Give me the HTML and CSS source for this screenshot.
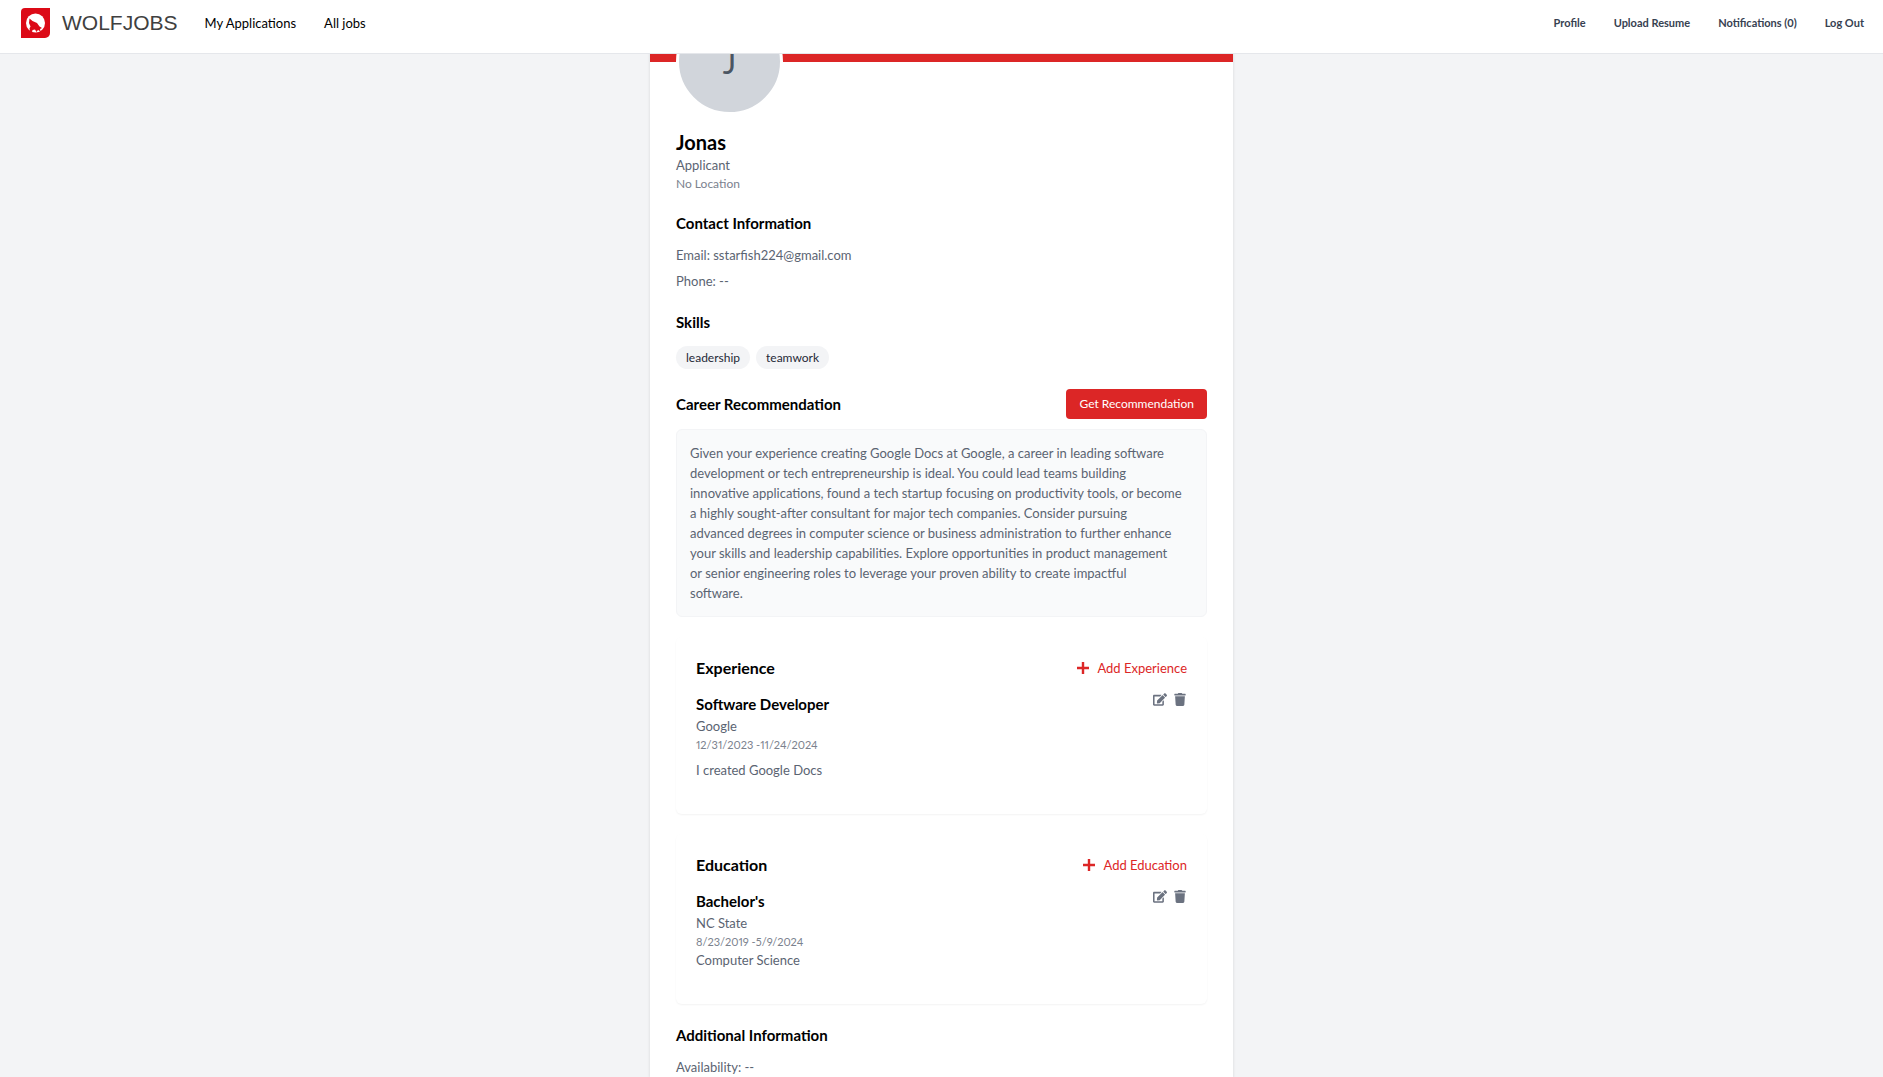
FILE: index.html
```html
<!DOCTYPE html>
<html lang="en">
<head>
<meta charset="utf-8">
<title>WolfJobs</title>
<link rel="stylesheet" href="styles.css">
</head>
<body>
<svg class="sprite" aria-hidden="true">
  <symbol id="plus" viewBox="0 0 12 12"><path d="M4.8 0h2.4v4.8H12v2.4H7.200V12H4.800V7.200H0V4.800h4.800z"/></symbol>
  <symbol id="edit" viewBox="0 0 576 512"><path d="M402.600 83.200l90.200 90.200c3.800 3.800 3.800 10 0 13.800L274.400 405.600l-92.800 10.300c-12.400 1.400-22.900-9.100-21.500-21.500l10.300-92.800L388.800 83.200c3.800-3.800 10-3.800 13.800 0zm162-22.900l-48.800-48.800c-15.200-15.200-39.900-15.200-55.200 0l-35.400 35.400c-3.800 3.800-3.800 10 0 13.800l90.200 90.200c3.800 3.800 10 3.800 13.800 0l35.400-35.400c15.200-15.300 15.200-40 0-55.200zM384 346.200V448H64V128h229.800c3.200 0 6.200-1.300 8.500-3.500l40-40c7.600-7.600 2.200-20.500-8.500-20.500H48C21.500 64 0 85.500 0 112v352c0 26.500 21.500 48 48 48h352c26.500 0 48-21.500 48-48V306.200c0-10.700-12.900-16-20.500-8.500l-40 40c-2.200 2.300-3.500 5.300-3.500 8.500z"/></symbol>
  <symbol id="trash" viewBox="0 0 448 512"><path d="M432 32H312l-9.400-18.700A24 24 0 0 0 281.100 0H166.800a23.700 23.700 0 0 0-21.400 13.300L136 32H16A16 16 0 0 0 0 48v32a16 16 0 0 0 16 16h416a16 16 0 0 0 16-16V48a16 16 0 0 0-16-16zM32 128l21.200 339a48 48 0 0 0 47.900 45h245.800a48 48 0 0 0 47.900-45L416 128z"/></symbol>
</svg>
<header class="topbar">
  <a class="brand" href="#">
    <svg class="logo" viewBox="0 0 29 30" aria-hidden="true">
      <path fill="#dc0a17" d="M4 0h25v25a5 5 0 0 1-5 5H0V4a4 4 0 0 1 4-4z"/>
      <circle cx="14.500" cy="15" r="9.500" fill="#fff"/>
      <path fill="#dc0a17" d="M8.500 10.500l3 2.500 4.500 2 2.500 3.500 2.500 1.500-2 1 .5 2.500-2.500-1.500-1.500 2-1.500-2.500-2.500.5-.5 2.500-2-1.500-.5-2.500 1-2-1.500-3.500z"/>
    </svg>
    <span>WOLFJOBS</span>
  </a>
  <nav class="main-nav">
    <a href="#">My Applications</a>
    <a href="#">All jobs</a>
  </nav>
  <nav class="user-nav">
    <a href="#">Profile</a>
    <a href="#">Upload Resume</a>
    <a href="#">Notifications (0)</a>
    <a href="#">Log Out</a>
  </nav>
</header>
<main class="profile">
  <div class="banner"></div>
  <div class="content">
    <div class="avatar">J</div>
    <h1>Jonas</h1>
    <p class="role">Applicant</p>
    <p class="small">No Location</p>

    <section class="block">
      <h2>Contact Information</h2>
      <p class="field">Email: sstarfish224@gmail.com</p>
      <p class="field">Phone: --</p>
    </section>

    <section class="block">
      <h2>Skills</h2>
      <ul class="skills"><li>leadership</li><li>teamwork</li></ul>
    </section>

    <section class="career">
      <div class="row">
        <h2>Career Recommendation</h2>
        <button class="primary" type="button">Get Recommendation</button>
      </div>
      <p class="advice">Given your experience creating Google Docs at Google, a career in leading software<br>
        development or tech entrepreneurship is ideal. You could lead teams building<br>
        innovative applications, found a tech startup focusing on productivity tools, or become<br>
        a highly sought-after consultant for major tech companies. Consider pursuing<br>
        advanced degrees in computer science or business administration to further enhance<br>
        your skills and leadership capabilities. Explore opportunities in product management<br>
        or senior engineering roles to leverage your proven ability to create impactful<br>
        software.</p>
    </section>

    <section class="panel">
      <div class="row">
        <h2 class="panel-title">Experience</h2>
        <button class="add" type="button"><svg><use href="#plus"/></svg>Add Experience</button>
      </div>
      <article class="entry">
        <div>
          <h3>Software Developer</h3>
          <p class="role">Google</p>
          <p class="small date">12/31/2023 -11/24/2024</p>
          <p class="role note">I created Google Docs</p>
        </div>
        <div class="tools">
          <button type="button" aria-label="Edit experience"><svg><use href="#edit"/></svg></button>
          <button type="button" aria-label="Delete experience"><svg><use href="#trash"/></svg></button>
        </div>
      </article>
    </section>

    <section class="panel">
      <div class="row">
        <h2 class="panel-title">Education</h2>
        <button class="add" type="button"><svg><use href="#plus"/></svg>Add Education</button>
      </div>
      <article class="entry">
        <div>
          <h3>Bachelor's</h3>
          <p class="role">NC State</p>
          <p class="small date">8/23/2019 -5/9/2024</p>
          <p class="role">Computer Science</p>
        </div>
        <div class="tools">
          <button type="button" aria-label="Edit education"><svg><use href="#edit"/></svg></button>
          <button type="button" aria-label="Delete education"><svg><use href="#trash"/></svg></button>
        </div>
      </article>
    </section>

    <section class="block">
      <h2>Additional Information</h2>
      <p class="field">Availability: --</p>
    </section>
  </div>
</main>
</body>
</html>
```
FILE: styles.css
```css
* { box-sizing: border-box; margin: 0; padding: 0; }
body {
  background: #f3f4f6;
  color: #000;
  font: 400 13px/20px Lato, "Open Sans", sans-serif;
}
a { color: inherit; text-decoration: none; }
button { border: 0; background: none; font: inherit; cursor: pointer; }
ul { list-style: none; }
.sprite { display: none; }

.topbar {
  position: fixed;
  inset: 0 0 auto;
  z-index: 1;
  display: flex;
  align-items: center;
  height: 54px;
  padding: 0 19px 8px 21px;
  background: #fff;
  border-bottom: 1px solid #e5e7eb;
}
.brand {
  display: flex;
  align-items: center;
  gap: 12px;
  color: #404040;
  font: 21px/30px "Liberation Sans", Arial, sans-serif;
}
.logo { width: 29px; height: 30px; }
.main-nav, .user-nav { display: flex; gap: 28px; }
.main-nav { margin-left: 27px; }
.user-nav { margin-left: auto; color: #374151; font-size: 11px; font-weight: 700; }

.profile {
  max-width: 583px;
  min-height: 100vh;
  margin: 0 auto;
  background: #fff;
  box-shadow: 0 1px 3px rgba(0, 0, 0, .12);
}
.banner { height: 62px; background: #dc2626; }
.content { padding: 0 26px; }
.avatar {
  width: 107px;
  height: 107px;
  margin-top: -54px;
  border: 3px solid #fff;
  border-radius: 50%;
  background: #d1d5db;
  color: #4b5563;
  font-size: 32px;
  line-height: 101px;
  text-align: center;
}
h1 { margin-top: 14px; font-size: 20px; line-height: 26px; font-weight: 700; }
h2, h3 { font-size: 15px; line-height: 24px; font-weight: 700; }
.role { color: #5b6472; }
.small { color: #7b828e; font-size: 12px; line-height: 17px; }
.date { font-size: 11px; font-variant-numeric: proportional-nums; }
.block { margin-top: 19px; }
.field { margin-top: 6px; color: #5b6472; }
h2 + .field { margin-top: 10px; }
.skills { display: flex; gap: 6px; margin-top: 12px; }
.skills li {
  padding: 1px 10px;
  border-radius: 12px;
  background: #f3f4f6;
  color: #1f2937;
  font-size: 12px;
  line-height: 21px;
}
.row { display: flex; align-items: center; justify-content: space-between; }
.career { margin-top: 20px; }
.primary {
  height: 30px;
  padding: 0 13px;
  border-radius: 4px;
  background: #dc2626;
  color: #fff;
  font-size: 12px;
}
.advice {
  margin-top: 10px;
  padding: 13px;
  border: 1px solid #f3f4f6;
  border-radius: 6px;
  background: #f9fafb;
  color: #5b6472;
}
.panel {
  margin-top: 20px;
  padding: 19px 20px 34px;
  border-radius: 6px;
  box-shadow: 0 1px 2px rgba(0, 0, 0, .05);
}
.panel-title { font-size: 16px; }
.add { display: flex; align-items: center; gap: 8px; color: #dc2626; }
.add svg { width: 12px; height: 12px; fill: currentColor; }
.entry { display: flex; justify-content: space-between; margin-top: 12px; }
.note { margin-top: 7px; }
.tools { display: flex; align-items: flex-start; gap: 6px; }
.tools button { height: 14px; color: #6b7280; line-height: 0; }
.tools svg { width: 14px; height: 13px; fill: currentColor; }
```
